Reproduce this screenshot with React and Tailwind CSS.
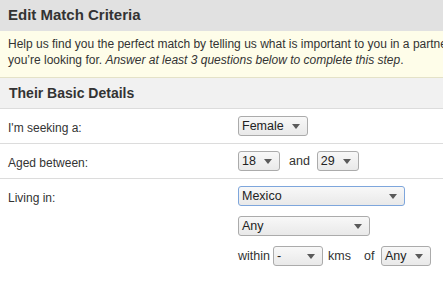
import React from 'react';

const font = { fontFamily: '"Liberation Sans", Arial, sans-serif' };

const Select = ({ value, width, focused }) => (
  <div
    className={`flex h-[20px] shrink-0 items-center justify-between rounded-[3px] border bg-gradient-to-b from-[#f8f8f8] to-[#e9e9e9] pl-[3px] pr-[7px] text-[12.5px] leading-none text-[#222] ${
      focused ? 'border-[#7ea6dc]' : 'border-[#ababab]'
    }`}
    style={{ width }}
  >
    <span>{value}</span>
    <svg width="8" height="5" viewBox="0 0 8 5" className="shrink-0">
      <path d="M0 0 L8 0 L4 5 Z" fill="#5a5a5a" />
    </svg>
  </div>
);

const Row = ({ label, children, last }) => (
  <div className={`grid grid-cols-[238px_1fr] ${last ? '' : 'border-b border-[#dcdcdc]'}`}>
    <div className="pl-[8px] pt-[11px] text-[12px] leading-[16px] text-[#333]">{label}</div>
    <div className="py-[7px]">{children}</div>
  </div>
);

export default function App() {
  return (
    <div className="h-[281px] w-full overflow-hidden bg-white" style={font}>
      <div className="w-[640px]">
        {/* Page title */}
        <div className="flex h-[31px] items-center bg-[#e1e1e1] pl-[8px]">
          <h1 className="text-[15px] font-bold text-[#333]">Edit Match Criteria</h1>
        </div>

        {/* Notice */}
        <div className="h-[47px] border-b border-[#e4e2c8] bg-[#fefde9] pl-[8px] pt-[5px] text-[12px] leading-[16px] text-[#333] whitespace-nowrap">
          Help us find you the perfect match by telling us what is important to you in a partner and what
          <br />
          you’re looking for. <em>Answer at least 3 questions below to complete this step</em>.
        </div>

        {/* Section header */}
        <div className="flex h-[31px] items-center border-b border-[#dcdcdc] bg-[#f1f1f1] pl-[9px]">
          <h2 className="text-[14px] font-bold text-[#333]">Their Basic Details</h2>
        </div>

        <Row label="I'm seeking a:">
          <Select value="Female" width={70} />
        </Row>

        <Row label="Aged between:">
          <div className="flex items-center">
            <Select value="18" width={42} />
            <span className="ml-[9px] mr-[7px] text-[12.5px] text-[#333]">and</span>
            <Select value="29" width={42} />
          </div>
        </Row>

        <Row label="Living in:" last>
          <div className="flex flex-col gap-[10px]">
            <Select value="Mexico" width={167} focused />
            <Select value="Any" width={132} />
            <div className="flex items-center text-[12.5px] text-[#333]">
              <span className="w-[35px]">within</span>
              <Select value="-" width={50} />
              <span className="ml-[5px] w-[36px]">kms</span>
              <span className="w-[17px]">of</span>
              <Select value="Any" width={50} />
            </div>
          </div>
        </Row>
      </div>
    </div>
  );
}
